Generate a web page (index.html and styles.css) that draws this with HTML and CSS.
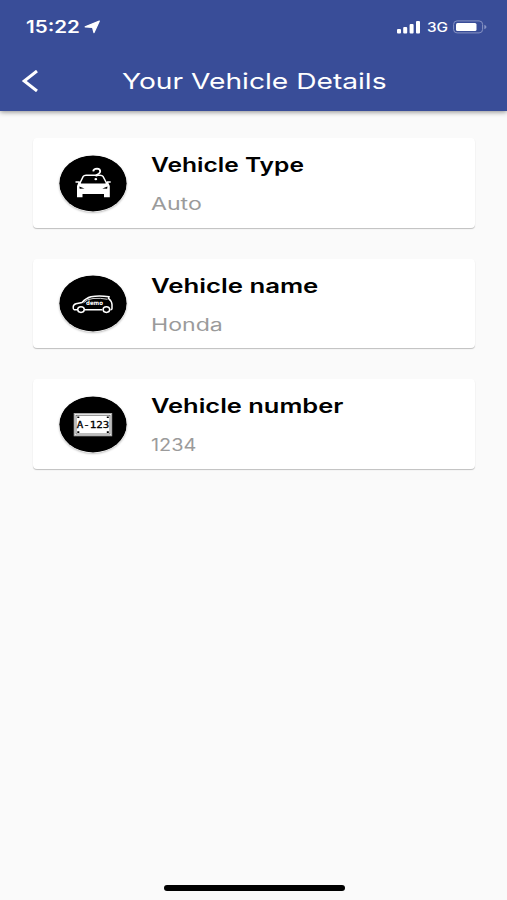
FILE: index.html
```html
<!DOCTYPE html>
<html lang="en">
<head>
<meta charset="utf-8">
<title>Your Vehicle Details</title>
<link rel="stylesheet" href="styles.css">
</head>

<body>
<div class="screen">
	<header class="header">
		<div class="status">
			<span class="time"><span class="wide">15:22</span></span>
			<svg class="arrow" width="17" height="14" viewBox="0 0 17 14"><path d="M1.2 6.8L15.3 1.1L10 12.6L8.6 7.4Z" fill="#fff" stroke="#fff" stroke-width="1.3" stroke-linejoin="round"/></svg>
			<div class="status_right">
				<svg width="24" height="13" viewBox="0 0 24 13" fill="#fff">
					<rect x="0" y="8" width="4" height="4.5" rx="1"/>
					<rect x="6.2" y="6" width="4" height="6.5" rx="1"/>
					<rect x="12.6" y="3" width="4" height="9.5" rx="1"/>
					<rect x="19" y="0" width="4" height="12.5" rx="1"/>
				</svg>
				<span class="network"><span class="wide">3G</span></span>
				<svg width="34" height="14" viewBox="0 0 34 14">
					<rect x=".6" y=".9" width="29" height="12" rx="3.5" fill="none" stroke="#8793c4"/>
					<rect x="3" y="3" width="20.5" height="8" rx="1.5" fill="#fff"/>
					<path d="M31.3 4.8Q33.5 5.5 33.5 7T31.3 9.2Z" fill="#8793c4"/>
				</svg>
			</div>
		</div>
		<div class="bar">
			<svg class="back" width="18" height="22" viewBox="0 0 18 22"><path d="M16 1L3.2 11L16 21" fill="none" stroke="#fff" stroke-width="3"/></svg>
			<h1 class="title"><span class="wide">Your Vehicle Details</span></h1>
		</div>
	</header>

	<ul class="list">
		<li class="card type">
			<svg class="icon" width="68" height="57" viewBox="0 0 68 57">
				<ellipse cx="34" cy="28.4" rx="33.7" ry="28"/>
				<path d="M20.5 29L24.2 21.4Q25 20.2 27 20.2H41Q43.2 20.2 44 21.4L48 29" fill="none" stroke="#fff" stroke-width="1.5"/>
				<path d="M16.5 26.2H20.5L22 28.5H46.5L48 26.2H51.7V27.8H49.3L50.8 31V42.3H45V39H23.5V42.3H18V31L19.3 27.8H16.5Z" fill="#fff"/>
				<path d="M20.3 31.5L25.5 33.5L20.7 33.8ZM48.5 31.5L43.3 33.5L48.1 33.8Z"/>
				<path d="M34.2 16.3Q34.5 13.6 38 13.6Q41.3 13.8 41.2 16.5Q41 18.5 37.5 20V21.6" fill="none" stroke="#fff" stroke-width="1.8"/>
				<ellipse cx="36.8" cy="24.2" rx="1.4" ry="1.1" fill="#fff"/>
			</svg>
			<div class="info">
				<h2 class="name"><span class="wide">Vehicle Type</span></h2>
				<p class="value"><span class="wide">Auto</span></p>
			</div>
		</li>
		<li class="card">
			<svg class="icon" width="68" height="57" viewBox="0 0 68 57">
				<ellipse cx="34" cy="28.4" rx="33.7" ry="28"/>
				<g fill="none" stroke="#fff" stroke-width="1.5">
					<path d="M18 34.8H15.2Q14 34.5 14.2 32Q14.3 29.5 17 28.8L23 27.6Q27 23 32 21.8Q40 20.3 50 21.8L49.5 23.3Q52.8 26 53 29.5V33.5Q53 34.8 51.5 34.8M26 34.8H43.3"/>
					<path d="M24.5 27.8Q28 24 34 23.5Q42 22.8 48.5 24.3" stroke-width=".8"/>
					<ellipse cx="22" cy="34.6" rx="3.3" ry="2.8"/>
					<ellipse cx="47.4" cy="34.6" rx="3.3" ry="2.8"/>
				</g>
				<text class="icon_demo" x="27" y="29.5" textLength="17" lengthAdjust="spacingAndGlyphs">demo</text>
			</svg>
			<div class="info">
				<h2 class="name"><span class="wide">Vehicle name</span></h2>
				<p class="value"><span class="wide">Honda</span></p>
			</div>
		</li>
		<li class="card number">
			<svg class="icon" width="68" height="57" viewBox="0 0 68 57">
				<ellipse cx="34" cy="28.4" rx="33.7" ry="28"/>
				<rect x="15.2" y="17.5" width="37.5" height="22.3" fill="#fff" stroke="#aaa"/>
				<rect x="17" y="19.2" width="34" height="18.8" fill="#fff" stroke="#444" stroke-width=".7"/>
				<path d="M18.3 20.4h2v1.7h-2zM47.8 20.4h2v1.7h-2zM18.3 35.2h2v1.7h-2zM47.8 35.2h2v1.7h-2z"/>
				<text class="icon_plate" x="17.8" y="31.6" textLength="32.6" lengthAdjust="spacingAndGlyphs">A-123</text>
			</svg>
			<div class="info">
				<h2 class="name"><span class="wide">Vehicle number</span></h2>
				<p class="value"><span class="wide">1234</span></p>
			</div>
		</li>
	</ul>

	<div class="home"></div>
</div>
</body>
</html>
```
FILE: styles.css
```css
body,ul,h1,h2,p{margin:0;padding:0;}
li{list-style:none;}
svg{display:block;flex:none;}
body{background:#fafafa;font-family:Inter,"Liberation Sans",sans-serif;}
.screen{height:900px;display:flex;flex-direction:column;overflow:hidden;}
.wide{display:inline-block;transform:scaleX(1.28);transform-origin:0 50%;white-space:nowrap;}

.header{height:111px;background:#394d98;color:#fff;box-shadow:0 1px 5px rgba(0,0,0,.45);}
.status{height:54px;display:flex;align-items:center;padding:0 20px 0 26px;}
.time{width:58px;font-size:17px;font-weight:600;line-height:20px;}
.time .wide{transform:scaleX(1.21);}
.status_right{margin-left:auto;display:flex;align-items:center;}
.network{width:32px;padding-left:6px;box-sizing:border-box;font-size:13px;font-weight:500;line-height:16px;}
.network .wide{transform:scaleX(1.18);}
.bar{height:54px;display:flex;align-items:center;padding-left:21px;}
.title{margin-left:82.5px;font-size:22px;font-weight:400;line-height:30px;}

.list{padding:27px 32px 0 33px;display:flex;flex-direction:column;gap:31px;}
.card{height:89.5px;display:flex;background:#fff;border-radius:4px;box-shadow:0 1px 1px rgba(0,0,0,.24);padding-left:26px;box-sizing:border-box;}
.icon{margin:16.5px 24.5px 0 -.5px;border-radius:50%;box-shadow:0 1px 2px rgba(0,0,0,.25);}
.icon_demo{font:bold 6px "DejaVu Sans",sans-serif;fill:#fff;}
.icon_plate{font:9.5px "DejaVu Sans Mono",monospace;stroke:#000;stroke-width:.3px;}
.name{margin-top:14px;font-size:19.5px;font-weight:600;line-height:26px;}
.value{margin-top:14px;font-size:17px;line-height:24px;color:#9b9b9b;}
.name .wide{transform:scaleX(1.32);}
.value .wide{transform:scaleX(1.36);}
.type .name .wide{transform:scaleX(1.26);}
.number .name .wide{transform:scaleX(1.305);}
.number .value .wide{transform:scaleX(1.17);}

.home{width:181px;height:6px;margin:auto auto 9px 164px;border-radius:3px;background:#000;}
```
